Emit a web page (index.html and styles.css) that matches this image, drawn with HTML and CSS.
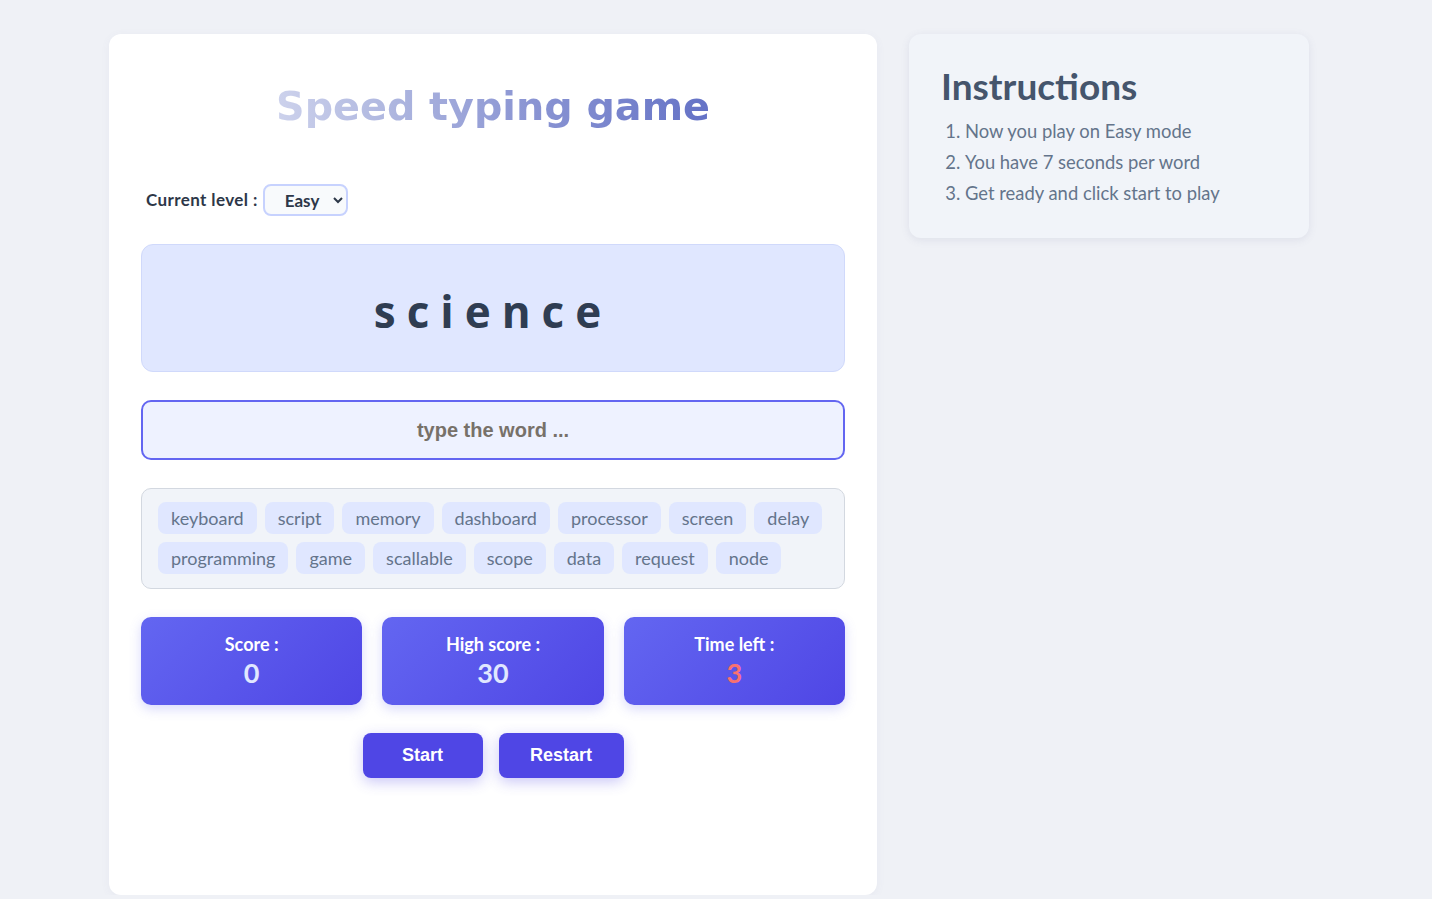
FILE: index.html
```html
<!DOCTYPE html>
<html lang="en">
<head>
<meta charset="utf-8">
<title>Speed typing game</title>
<link rel="stylesheet" href="styles.css">
</head>
<body>
<div class="page">
  <main class="game">
    <h1 class="title">Speed typing game</h1>
    <div class="level-row">
      <label class="level-label" for="level">Current level :</label>
      <select id="level" class="level-select">
        <option>Easy</option>
        <option>Normal</option>
        <option>Hard</option>
      </select>
    </div>
    <div class="word-box"><span class="word">science</span></div>
    <input class="word-input" type="text" placeholder="type the word ...">
    <div class="words-list">
      <span class="tag">keyboard</span>
      <span class="tag">script</span>
      <span class="tag">memory</span>
      <span class="tag">dashboard</span>
      <span class="tag">processor</span>
      <span class="tag">screen</span>
      <span class="tag">delay</span>
      <span class="tag">programming</span>
      <span class="tag">game</span>
      <span class="tag">scallable</span>
      <span class="tag">scope</span>
      <span class="tag">data</span>
      <span class="tag">request</span>
      <span class="tag">node</span>
    </div>
    <div class="stats">
      <div class="stat"><span class="stat-label">Score :</span><span class="stat-value">0</span></div>
      <div class="stat"><span class="stat-label">High score :</span><span class="stat-value">30</span></div>
      <div class="stat"><span class="stat-label">Time left :</span><span class="stat-value stat-time">3</span></div>
    </div>
    <div class="actions">
      <button class="btn btn-start" type="button">Start</button>
      <button class="btn btn-restart" type="button">Restart</button>
    </div>
  </main>
  <aside class="instructions">
    <h2 class="instructions-title">Instructions</h2>
    <ol class="instructions-list">
      <li>Now you play on Easy mode</li>
      <li>You have 7 seconds per word</li>
      <li>Get ready and click start to play</li>
    </ol>
  </aside>
</div>
</body>
</html>
```

FILE: styles.css
```css
* { box-sizing: border-box; }

html, body {
  margin: 0;
  padding: 0;
  background: #eff1f6;
  font-family: Lato, "Open Sans", sans-serif;
  overflow: hidden;
}

.page {
  display: flex;
  align-items: flex-start;
  gap: 32px;
  padding: 34px 0 0 109px;
}

.game {
  width: 768px;
  min-height: 861px;
  background: #ffffff;
  border-radius: 12px;
  padding: 32px;
  display: flex;
  flex-direction: column;
  box-shadow: 0 2px 10px rgba(100, 110, 150, 0.06);
}

.title {
  margin: 16px 0 0;
  text-align: center;
  font-family: "DejaVu Sans", Verdana, sans-serif;
  font-weight: 700;
  font-size: 39.7px;
  line-height: 48px;
  background: linear-gradient(90deg, #cdd2ec 0%, #b0b8e0 25%, #8e98d4 55%, #6472c6 100%);
  -webkit-background-clip: text;
  background-clip: text;
  color: transparent;
  align-self: center;
}

.level-row {
  display: flex;
  align-items: center;
  gap: 5px;
  margin-top: 54px;
  padding-left: 5px;
}

.level-label {
  font-weight: 700;
  font-size: 17px;
  line-height: 20px;
  letter-spacing: 0.4px;
  color: #2d3748;
  padding-bottom: 1px;
}

.level-select {
  width: 85px;
  height: 32px;
  border: 2px solid #c7d2fe;
  border-radius: 8px;
  background: #f8fafc;
  font-family: Lato, "Open Sans", sans-serif;
  font-weight: 700;
  font-size: 17px;
  color: #2d3748;
  padding: 0 0 0 16px;
}

.word-box {
  margin-top: 28px;
  height: 128px;
  background: #e0e7ff;
  border: 1px solid #d0d9fb;
  border-radius: 12px;
  display: flex;
  align-items: center;
  justify-content: center;
  padding-top: 5px;
}

.word {
  font-family: "Open Sans", Lato, sans-serif;
  font-weight: 700;
  font-size: 44px;
  letter-spacing: 11px;
  color: #2f3d52;
}

.word-input {
  margin-top: 28px;
  height: 60px;
  width: 100%;
  border: 2px solid #6366f1;
  border-radius: 10px;
  background: #eef2ff;
  text-align: center;
  font-family: "Liberation Sans", Arial, sans-serif;
  font-weight: 700;
  font-size: 20px;
  color: #333;
  outline: none;
}

.word-input::placeholder {
  color: #777169;
}

.words-list {
  margin-top: 28px;
  background: #f1f4f9;
  border: 1px solid #d3d8e0;
  border-radius: 10px;
  padding: 13px 15px 14px 16px;
  display: flex;
  flex-wrap: wrap;
  gap: 8px;
}

.tag {
  background: #e0e7ff;
  border-radius: 8px;
  padding: 0 13px;
  height: 32px;
  line-height: 32px;
  font-size: 18px;
  color: #64748b;
}

.stats {
  margin-top: 28px;
  display: grid;
  grid-template-columns: repeat(3, 1fr);
  gap: 20px;
}

.stat {
  height: 88px;
  border-radius: 10px;
  background: linear-gradient(135deg, #6366f1 0%, #4f46e5 100%);
  box-shadow: 0 4px 12px rgba(99, 102, 241, 0.25);
  display: flex;
  flex-direction: column;
  align-items: center;
  justify-content: center;
  color: #ffffff;
}

.stat-label {
  font-weight: 700;
  font-size: 18px;
  line-height: 24px;
}

.stat-value {
  font-weight: 700;
  font-size: 27px;
  line-height: 34px;
  color: #e0e7ff;
}

.stat-time {
  color: #f87171;
}

.actions {
  margin-top: 28px;
  display: flex;
  justify-content: center;
  gap: 16px;
}

.btn {
  height: 45px;
  border: none;
  border-radius: 8px;
  background: #4f46e5;
  color: #ffffff;
  font-family: "Liberation Sans", Arial, sans-serif;
  font-weight: 700;
  font-size: 18px;
  box-shadow: 0 4px 14px rgba(79, 70, 229, 0.3);
}

.btn-start { width: 120px; }
.btn-restart { width: 125px; }

.instructions {
  width: 400px;
  background: #f1f4f9;
  border-radius: 12px;
  padding: 30px 32px 29px;
  box-shadow: 0 2px 8px rgba(100, 110, 150, 0.12);
}

.instructions-title {
  margin: 0;
  font-weight: 700;
  font-size: 37px;
  line-height: 44px;
  color: #45556c;
}

.instructions-list {
  margin: 8px 0 0;
  padding-left: 24px;
  color: #64748b;
  font-size: 18.4px;
  line-height: 31px;
}
```
